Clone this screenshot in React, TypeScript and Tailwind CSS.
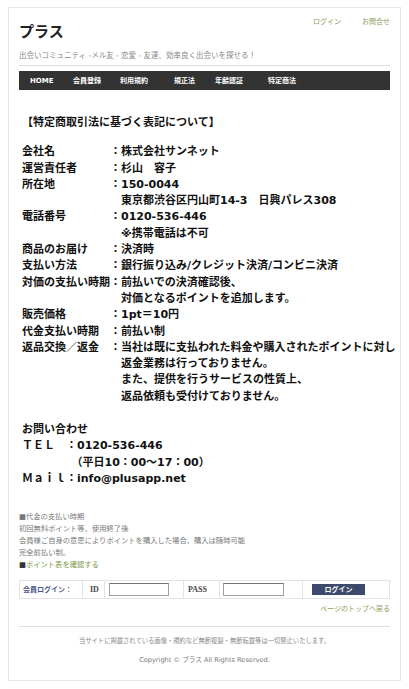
import React from 'react'

const rows: [string, string[]][] = [
  ['会社名', ['株式会社サンネット']],
  ['運営責任者', ['杉山　容子']],
  ['所在地', ['150-0044', '東京都渋谷区円山町14-3　日興パレス308']],
  ['電話番号', ['0120-536-446', '※携帯電話は不可']],
  ['商品のお届け', ['決済時']],
  ['支払い方法', ['銀行振り込み/クレジット決済/コンビニ決済']],
  ['対価の支払い時期', ['前払いでの決済確認後、', '対価となるポイントを追加します。']],
  ['販売価格', ['1pt＝10円']],
  ['代金支払い時期', ['前払い制']],
  [
    '返品交換／返金',
    [
      '当社は既に支払われた料金や購入されたポイントに対し',
      '返金業務は行っておりません。',
      'また、提供を行うサービスの性質上、',
      '返品依頼も受付けておりません。'
    ]
  ]
]

const navItems = [
  { label: 'HOME', w: 'w-[43px]' },
  { label: '会員登録', w: 'w-[47px]' },
  { label: '利用規約', w: 'w-[54px]' },
  { label: '規正法', w: 'w-[41px]' },
  { label: '年齢認証', w: 'w-[53px]' },
  { label: '特定商法', w: 'w-[60px]' }
]

const sans = "font-['DejaVu_Sans','Noto_Sans_CJK_JP',sans-serif]"

export default function App() {
  return (
    <div className={`w-[409px] h-[689px] bg-white pt-[7px] px-[8px] ${sans}`}>
      <div className="h-[674px] border border-[#e6e6e6] px-[10px] overflow-hidden">
        {/* Header */}
        <div className="flex justify-between items-start pt-[9px]">
          <h1 className="mt-[5px] text-[15px] leading-[18px] font-bold text-[#222] font-['Noto_Sans_CJK_JP',sans-serif]">
            プラス
          </h1>
          <div className="flex gap-[21px] text-[7px] leading-[10px] text-[#8a9c5c]">
            <span>ログイン</span>
            <span>お問合せ</span>
          </div>
        </div>
        <p className="mt-[11px] text-[7.5px] leading-[10px] text-[#888] whitespace-nowrap">
          出会いコミュニティ -メル友 - 恋愛 - 友達、効率良く出会いを探せる！
        </p>
        <div className="mt-[4px] border-b border-[#dddddd]"></div>

        {/* Nav */}
        <nav className="mt-[5px] h-[19px] bg-[#333333] flex items-center pl-[11px]">
          {navItems.map((n) => (
            <span key={n.label} className={`${n.w} text-[7px] leading-[10px] font-bold text-white`}>
              {n.label}
            </span>
          ))}
        </nav>

        {/* Main */}
        <div className="pt-[23px] pl-[3px] text-[11px] leading-[16.3px] font-bold text-[#111]">
          <p className="mb-[15px] font-['Noto_Sans_CJK_JP',sans-serif]">【特定商取引法に基づく表記について】</p>
          <div className="grid grid-cols-[88px_11px_1fr]">
            {rows.map(([label, values]) => (
              <React.Fragment key={label}>
                <span className="whitespace-nowrap">{label}</span>
                <span>：</span>
                <div>
                  {values.map((v) => (
                    <div key={v} className="whitespace-nowrap">{v}</div>
                  ))}
                </div>
              </React.Fragment>
            ))}
          </div>

          <div className="mt-[17px]">
            <div>お問い合わせ</div>
            <div className="whitespace-nowrap">ＴＥＬ　：0120-536-446</div>
            <div className="whitespace-nowrap">　　　　　（平日10：00～17：00）</div>
            <div className="whitespace-nowrap">Ｍａｉｌ：info@plusapp.net</div>
          </div>
        </div>

        {/* Info */}
        <div className="mt-[24px] text-[7.3px] leading-[12px] text-[#777]">
          <div>■代金の支払い時期</div>
          <div>初回無料ポイント等、使用終了後</div>
          <div>会員様ご自身の意思によりポイントを購入した場合、購入は随時可能</div>
          <div>完全前払い制。</div>
          <div>
            <span className="text-[#333]">■</span>
            <span className="text-[#7f9a4a]">ポイント表を確認する</span>
          </div>
        </div>

        {/* Login bar */}
        <div className="mt-[9px] h-[19px] border border-[#e3e3e3] grid grid-cols-[63px_22px_79px_36px_83px_85px] divide-x divide-[#e3e3e3] text-[7px] leading-[10px]">
          <div className="flex items-center pl-[3px] font-bold text-[#4b5b8b] whitespace-nowrap">会員ログイン：</div>
          <div className="flex items-center pl-[7px] font-bold text-[8px] text-[#444] font-['Liberation_Serif',serif]">ID</div>
          <div className="flex items-center pl-[4px]">
            <div className="w-[60px] h-[13px] border border-[#a0a0a0] border-t-[#767676] bg-white"></div>
          </div>
          <div className="flex items-center pl-[4px] font-bold text-[8px] text-[#444] font-['Liberation_Serif',serif]">PASS</div>
          <div className="flex items-center pl-[3px]">
            <div className="w-[61px] h-[13px] border border-[#a0a0a0] border-t-[#767676] bg-white"></div>
          </div>
          <div className="flex items-center pl-[9px]">
            <div className="w-[53px] h-[11px] bg-[#3d4a6b] flex items-center justify-center text-white font-bold text-[7px]">
              ログイン
            </div>
          </div>
        </div>

        <div className="mt-[5px] text-right text-[7px] leading-[10px] text-[#8aa05a]">ページのトップへ戻る</div>

        <div className="mt-[12px] border-b border-[#e0e0e0]"></div>

        {/* Footer */}
        <p className="mt-[9px] text-center text-[6.3px] leading-[9px] text-[#888]">
          当サイトに掲載されている画像・規約など無断複製・無断転載等は一切禁止いたします。
        </p>
        <p className="mt-[11px] text-center text-[6.6px] leading-[9px] text-[#777]">
          Copyright © プラス All Rights Reserved.
        </p>
      </div>
    </div>
  )
}
